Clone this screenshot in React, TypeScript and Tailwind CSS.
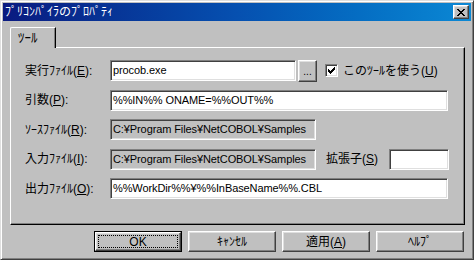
import React from 'react'

const sunken =
  'border border-t-[#808080] border-l-[#808080] border-r-white border-b-white shadow-[inset_1px_1px_0_#404040,inset_-1px_-1px_0_#dfdfdf]'
const raised =
  'border border-t-white border-l-white border-r-[#404040] border-b-[#404040] shadow-[inset_-1px_-1px_0_#808080,inset_1px_1px_0_#dfdfdf]'

function Label({ text, k, rest = ':' }: { text: string; k: string; rest?: string }) {
  return (
    <span className="w-[85px] shrink-0 text-[12px] text-black whitespace-nowrap">
      {text}(<span className="underline">{k}</span>){rest}
    </span>
  )
}

function Field({ value, width, disabled }: { value: string; width: string; disabled?: boolean }) {
  return (
    <div
      className={`${sunken} ${width} shrink-0 h-[21px] flex items-center pl-[2px] text-[11px] tracking-[-0.1px] text-black whitespace-nowrap overflow-hidden ${
        disabled ? 'bg-[#c0c0c0]' : 'bg-white'
      }`}
    >
      {value}
    </div>
  )
}

function Button({ children, def }: { children: React.ReactNode; def?: boolean }) {
  if (def) {
    return (
      <div className="w-[88px] h-[21px] border border-black">
        <div className={`${raised} w-full h-full flex items-center justify-center p-[2px]`}>
          <div className="w-full h-full border border-dotted border-black flex items-center justify-center text-[12px] text-black">
            {children}
          </div>
        </div>
      </div>
    )
  }
  return (
    <div className={`${raised} w-[88px] h-[21px] flex items-center justify-center text-[12px] text-black`}>
      {children}
    </div>
  )
}

export default function App() {
  return (
    <div className="w-[474px] h-[260px] bg-[#c0c0c0] border border-t-[#dfdfdf] border-l-[#dfdfdf] border-r-[#404040] border-b-[#404040] shadow-[inset_1px_1px_0_#fff,inset_-1px_-1px_0_#808080] p-[2px] flex flex-col font-['Liberation_Sans','Noto_Sans_CJK_JP',sans-serif] select-none">
      {/* Title bar */}
      <div className="h-[18px] shrink-0 flex items-center justify-between pl-[2px] pr-[2px] bg-linear-to-r from-[#0a1a80] via-[#0650b0] to-[#0c88d4]">
        <span className="text-[12px] text-white leading-none whitespace-nowrap">ﾌﾟﾘｺﾝﾊﾟｲﾗのﾌﾟﾛﾊﾟﾃｨ</span>
        <div className={`${raised} w-[16px] h-[14px] bg-[#c0c0c0] flex items-center justify-center`}>
          <svg width="8" height="7" viewBox="0 0 8 7" shapeRendering="crispEdges">
            <path d="M0 0h2v1H0zM6 0h2v1H6zM1 1h2v1H1zM5 1h2v1H5zM2 2h4v1H2zM3 3h2v1H3zM2 4h4v1H2zM1 5h2v1H1zM5 5h2v1H5zM0 6h2v1H0zM6 6h2v1H6z" fill="#000" />
          </svg>
        </div>
      </div>

      {/* Body */}
      <div className="flex-1 flex flex-col pl-[7px] pr-[6px] pt-[6px]">
        {/* Tab */}
        <div className="flex">
          <div className="relative z-10 -mb-px w-[46px] h-[21px] bg-[#c0c0c0] border-t border-l border-t-white border-l-white border-r border-r-black rounded-tl-[2px] shadow-[inset_-1px_0_0_#808080] flex items-center pl-[7px]">
            <span className="text-[13px] text-black">ﾂｰﾙ</span>
          </div>
        </div>

        {/* Panel */}
        <div className="w-[455px] h-[178px] border border-t-white border-l-white border-r-black border-b-black shadow-[inset_-1px_-1px_0_#808080] pl-[14px] pt-[12px] flex flex-col gap-[8.5px]">
          <div className="flex items-center h-[21px]">
            <Label text="実行ﾌｧｲﾙ" k="E" />
            <Field value="procob.exe" width="w-[186px]" />
            <div className={`${raised} ml-[2px] w-[19px] h-[22px] flex items-end justify-center pb-[4px] text-[10px] leading-none text-black`}>
              ...
            </div>
            <div className={`${sunken} ml-[8px] w-[13px] h-[13px] bg-white flex items-center justify-center`}>
              <svg width="7" height="7" viewBox="0 0 7 7" shapeRendering="crispEdges">
                <path d="M6 0h1v3H6zM5 1h1v3H5zM4 2h1v3H4zM3 3h1v3H3zM2 4h1v3H2zM1 3h1v3H1zM0 2h1v3H0z" fill="#000" />
              </svg>
            </div>
            <span className="ml-[5px] text-[12px] text-black whitespace-nowrap">
              このﾂｰﾙを使う(<span className="underline">U</span>)
            </span>
          </div>

          <div className="flex items-center h-[21px]">
            <Label text="引数" k="P" />
            <Field value="%%IN%% ONAME=%%OUT%%" width="w-[338px]" />
          </div>

          <div className="flex items-center h-[21px]">
            <Label text="ｿｰｽﾌｧｲﾙ" k="R" />
            <Field value="C:¥Program Files¥NetCOBOL¥Samples" width="w-[206px]" disabled />
          </div>

          <div className="flex items-center h-[21px]">
            <Label text="入力ﾌｧｲﾙ" k="I" />
            <Field value="C:¥Program Files¥NetCOBOL¥Samples" width="w-[206px]" disabled />
            <span className="ml-[10px] w-[63px] shrink-0 text-[12px] text-black whitespace-nowrap">
              拡張子(<span className="underline">S</span>)
            </span>
            <Field value="" width="w-[60px]" />
          </div>

          <div className="flex items-center h-[21px]">
            <Label text="出力ﾌｧｲﾙ" k="O" />
            <Field value="%%WorkDir%%¥%%InBaseName%%.CBL" width="w-[338px]" />
          </div>
        </div>

        {/* Buttons */}
        <div className="flex justify-end gap-[6px] mt-[6px] pr-px">
          <Button def>OK</Button>
          <Button>ｷｬﾝｾﾙ</Button>
          <Button>
            <span>
              適用(<span className="underline">A</span>)
            </span>
          </Button>
          <Button>ﾍﾙﾌﾟ</Button>
        </div>
      </div>
    </div>
  )
}
